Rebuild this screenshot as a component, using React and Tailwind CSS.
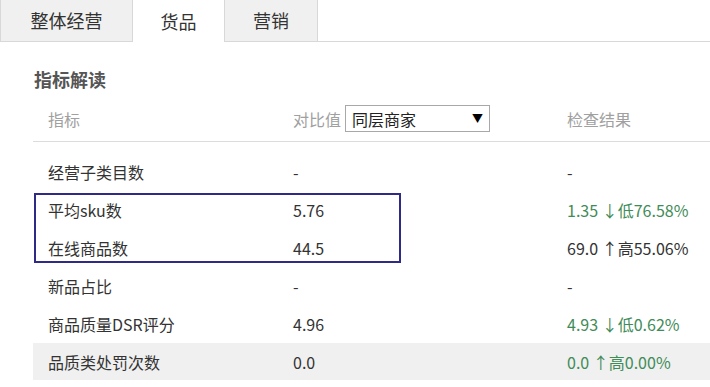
const rows = [
  { name: '经营子类目数', value: '-', result: '-', tone: 'plain' },
  { name: '平均sku数', value: '5.76', result: '1.35 ↓低76.58%', tone: 'good' },
  { name: '在线商品数', value: '44.5', result: '69.0 ↑高55.06%', tone: 'plain' },
  { name: '新品占比', value: '-', result: '-', tone: 'plain' },
  { name: '商品质量DSR评分', value: '4.96', result: '4.93 ↓低0.62%', tone: 'good' },
  { name: '品质类处罚次数', value: '0.0', result: '0.0 ↑高0.00%', tone: 'good', shaded: true },
];

const font = { fontFamily: '"Noto Sans CJK SC", "Noto Sans", sans-serif' };

export default function App() {
  return (
    <div className="w-[710px] h-[387px] bg-white overflow-hidden relative text-[#333]" style={font}>
      {/* tabs */}
      <div className="flex h-[42px]">
        <div className="w-[133px] flex items-center justify-center bg-[#f0f0f0] border-l border-r border-b border-[#d8d8d8] text-[18px] text-[#333]">
          整体经营
        </div>
        <div className="w-[91px] flex items-center justify-center bg-white text-[18px] text-[#333]">
          货品
        </div>
        <div className="w-[94px] flex items-center justify-center bg-[#f0f0f0] border-l border-r border-b border-[#d8d8d8] text-[18px] text-[#333]">
          营销
        </div>
        <div className="flex-1 border-b border-[#d8d8d8]"></div>
      </div>

      <div className="pl-[33px]">
        <div className="h-[34px] mt-[20px] flex items-center pl-[1px] text-[18px] font-bold text-[#555]">
          指标解读
        </div>

        {/* header */}
        <div className="flex items-center h-[46px] border-b border-[#dcdcdc] text-[16px] text-[#a0a0a0]">
          <div className="w-[260px] pl-[15px]">指标</div>
          <div className="w-[274px] flex items-center">
            <span>对比值</span>
            <div className="ml-[4px] w-[145px] h-[27px] border border-[#a8a8a8] flex items-center justify-between pl-[6px] pr-[6px] text-[#222] bg-white">
              <span>同层商家</span>
              <span className="text-[11px] text-black">▼</span>
            </div>
          </div>
          <div>检查结果</div>
        </div>

        <div className="mt-[11px]">
          {rows.map((r) => (
            <div
              key={r.name}
              className={
                'flex items-center text-[16px] ' +
                (r.shaded ? 'h-[37px] bg-[#f0f0f0]' : 'h-[38px]')
              }
            >
              <div className="w-[260px] pl-[15px] text-[#333]">{r.name}</div>
              <div className="w-[274px] text-[#333]">{r.value}</div>
              <div className={r.tone === 'good' ? 'text-[#3f8c58]' : 'text-[#333]'}>{r.result}</div>
            </div>
          ))}
        </div>
      </div>

      {/* highlight annotation */}
      <div className="absolute left-[34px] top-[193px] w-[367px] h-[70px] border-2 border-[#2e2a86]"></div>
    </div>
  );
}
